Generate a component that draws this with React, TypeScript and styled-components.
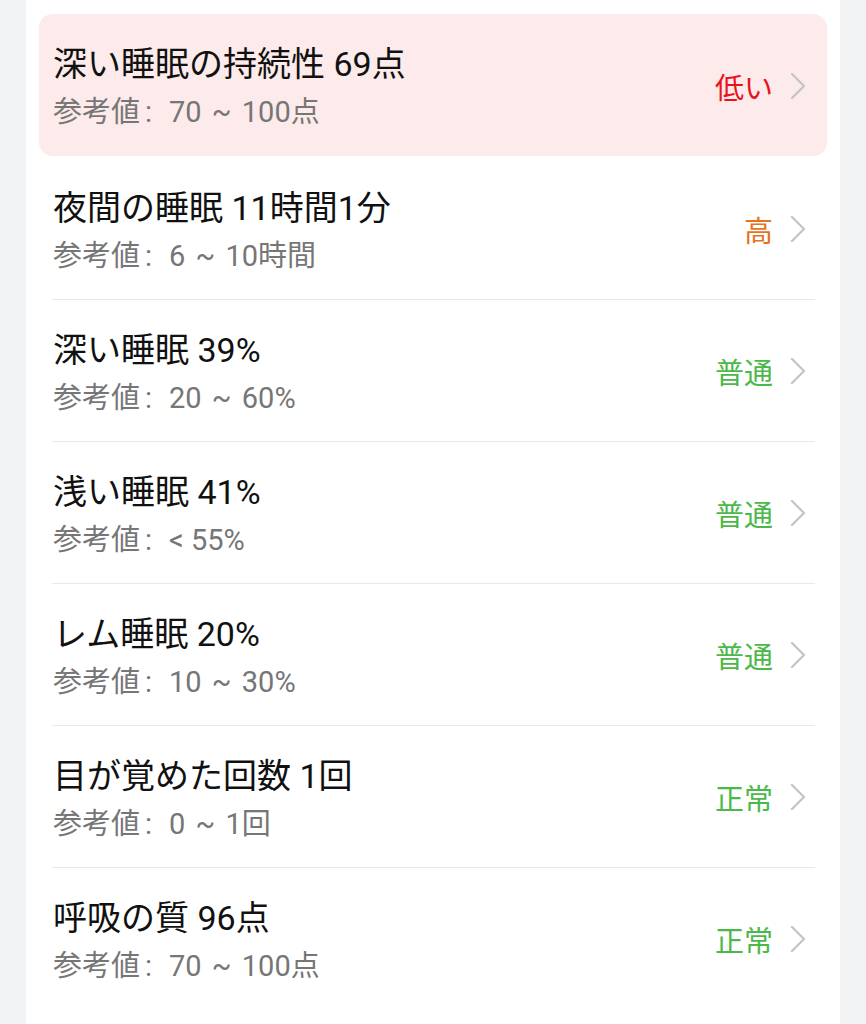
import styled, { createGlobalStyle } from "styled-components";

const GlobalStyle = createGlobalStyle`
  html, body {
    margin: 0;
    padding: 0;
    background: #f1f3f5;
  }
  body {
    font-family: Roboto, "Noto Sans CJK JP", sans-serif;
  }
`;

const Page = styled.div`
  display: flex;
  justify-content: center;
  min-height: 1024px;
  padding: 0 26px;
`;

const Card = styled.div`
  flex: 1;
  background: #ffffff;
  padding: 14px 13px 0;
  display: flex;
  flex-direction: column;
`;

const Row = styled.div<{ $alert?: boolean }>`
  display: flex;
  align-items: center;
  height: ${(p) => (p.$alert ? "142px" : "141px")};
  margin-bottom: ${(p) => (p.$alert ? "2px" : "0")};
  padding: 0 21px 0 14px;
  box-sizing: border-box;
  border-radius: 14px;
  background: ${(p) => (p.$alert ? "#fcebea" : "transparent")};
`;

const Texts = styled.div`
  flex: 1;
  display: flex;
  flex-direction: column;
  padding-top: 8px;
`;

const Title = styled.div`
  font-size: 34px;
  font-weight: 400;
  line-height: 46px;
  color: #111111;
`;

const Sub = styled.div`
  font-size: 29px;
  line-height: 50px;
  color: #767676;
`;

const Colon = styled.span`
  margin: 0 17px 0 5px;
`;

const Tilde = styled.span`
  margin: 0 3px;
`;

const Status = styled.div<{ $color: string }>`
  display: flex;
  align-items: center;
  gap: 17px;
  font-size: 29px;
  color: ${(p) => p.$color};
  margin-top: 1px;
`;

const Divider = styled.div`
  height: 1px;
  background: #e9e9e9;
  margin: 0 12px 0 13px;
`;

const Chevron = () => (
  <svg width="16" height="28" viewBox="0 0 16 28">
    <polyline
      points="2,2 14,14 2,26"
      fill="none"
      stroke="#c6c6c6"
      strokeWidth="2.4"
      strokeLinecap="round"
      strokeLinejoin="round"
    />
  </svg>
);

const RED = "#e8131b";
const ORANGE = "#e5731f";
const GREEN = "#4cb84a";

const items = [
  { title: "深い睡眠の持続性 69点", lo: "70", hi: "100点", status: "低い", color: RED, alert: true },
  { title: "夜間の睡眠 11時間1分", lo: "6", hi: "10時間", status: "高", color: ORANGE },
  { title: "深い睡眠 39%", lo: "20", hi: "60%", status: "普通", color: GREEN },
  { title: "浅い睡眠 41%", lo: "", hi: "< 55%", status: "普通", color: GREEN },
  { title: "レム睡眠 20%", lo: "10", hi: "30%", status: "普通", color: GREEN },
  { title: "目が覚めた回数 1回", lo: "0", hi: "1回", status: "正常", color: GREEN },
  { title: "呼吸の質 96点", lo: "70", hi: "100点", status: "正常", color: GREEN },
];

export default function App() {
  return (
    <>
      <GlobalStyle />
      <Page>
        <Card>
          {items.map((it, i) => (
            <div key={it.title}>
              {i > 1 && <Divider />}
              <Row $alert={it.alert}>
                <Texts>
                  <Title>{it.title}</Title>
                  <Sub>
                    参考値<Colon>:</Colon>
                    {it.lo ? (
                      <>
                        {it.lo}
                        <Tilde> ~ </Tilde>
                        {it.hi}
                      </>
                    ) : (
                      it.hi
                    )}
                  </Sub>
                </Texts>
                <Status $color={it.color}>
                  {it.status}
                  <Chevron />
                </Status>
              </Row>
            </div>
          ))}
        </Card>
      </Page>
    </>
  );
}
